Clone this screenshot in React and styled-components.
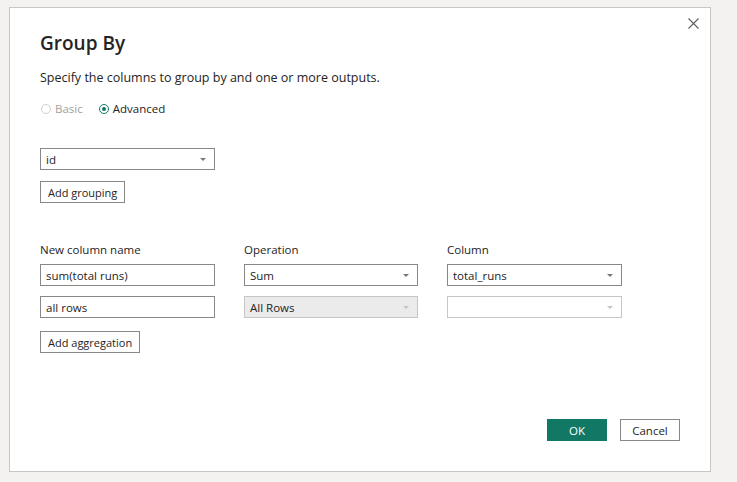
import React from "react";
import styled, { createGlobalStyle } from "styled-components";

const Global = createGlobalStyle`
  html, body { margin: 0; padding: 0; background: #f3f2f1; }
  body { font-family: "Open Sans", "Noto Sans", sans-serif; color: #252423; }
  * { box-sizing: border-box; }
`;

const Page = styled.div`
  width: 737px;
  height: 482px;
  padding: 7px 0 0 9px;
`;

const Dialog = styled.div`
  position: relative;
  width: 702px;
  height: 465px;
  background: #fff;
  border: 1px solid #c8c6c4;
  padding: 20px 30px 0 30px;
  display: flex;
  flex-direction: column;
`;

const Close = styled.button`
  position: absolute;
  top: 6px;
  right: 8px;
  width: 18px;
  height: 18px;
  padding: 0;
  border: none;
  background: transparent;
  display: flex;
  align-items: center;
  justify-content: center;
`;

const Title = styled.h1`
  margin: 0;
  font-size: 19px;
  font-weight: 600;
  line-height: 30px;
  color: #252423;
`;

const Subtitle = styled.p`
  margin: 11px 0 0 0;
  font-size: 12.5px;
  line-height: 18px;
`;

const RadioRow = styled.div`
  display: flex;
  gap: 16px;
  margin-top: 14px;
  padding-left: 1px;
  font-size: 11.5px;
  line-height: 16px;
`;

const RadioLabel = styled.label`
  display: flex;
  align-items: center;
  gap: 4px;
  color: ${(p) => (p.disabled ? "#a19f9d" : "#252423")};
`;

const RadioDot = styled.span`
  width: 10px;
  height: 10px;
  border-radius: 50%;
  border: 1px solid ${(p) => (p.checked ? "#117865" : "#d2d0ce")};
  display: flex;
  align-items: center;
  justify-content: center;
  &::after {
    content: "";
    width: 4px;
    height: 4px;
    border-radius: 50%;
    background: ${(p) => (p.checked ? "#117865" : "transparent")};
  }
`;

const Field = styled.div`
  width: ${(p) => p.w || 175}px;
  height: 22px;
  border: 1px solid ${(p) => (p.faint ? "#c8c6c4" : "#8a8886")};
  background: ${(p) => (p.shade ? "#ebebeb" : "#fff")};
  display: flex;
  align-items: center;
  justify-content: space-between;
  padding: 0 8px 0 5px;
  font-size: 11.5px;
  color: #252423;
`;

const Arrow = styled.span`
  width: 0;
  height: 0;
  border-left: 3px solid transparent;
  border-right: 3px solid transparent;
  border-top: 3px solid ${(p) => (p.faint ? "#c8c6c4" : "#79777a")};
`;

const Button = styled.button`
  height: 22px;
  padding: 0 7px;
  border: 1px solid #8a8886;
  background: #fff;
  font-family: inherit;
  font-size: 11px;
  color: #252423;
  align-self: flex-start;
`;

const GroupArea = styled.div`
  display: flex;
  flex-direction: column;
  gap: 11px;
  margin-top: 31px;
`;

const Grid = styled.div`
  display: grid;
  grid-template-columns: 204px 203px 175px;
  row-gap: 10px;
  margin-top: 39px;
`;

const ColLabel = styled.div`
  font-size: 11.5px;
  line-height: 16px;
  margin-bottom: -4px;
  color: #252423;
`;

const AggButton = styled(Button)`
  margin-top: 13px;
`;

const Footer = styled.div`
  margin-top: auto;
  margin-bottom: 30px;
  display: flex;
  justify-content: flex-end;
  gap: 13px;
`;

const FootButton = styled.button`
  width: 60px;
  height: 22px;
  font-family: inherit;
  font-size: 11.5px;
  border: 1px solid ${(p) => (p.primary ? "#117865" : "#8a8886")};
  background: ${(p) => (p.primary ? "#117865" : "#fff")};
  color: ${(p) => (p.primary ? "#fff" : "#252423")};
`;

const Select = ({ value, w, shade, faint }) => (
  <Field w={w} shade={shade} faint={faint}>
    <span>{value}</span>
    <Arrow faint={faint} />
  </Field>
);

export default function App() {
  return (
    <Page>
      <Global />
      <Dialog>
        <Close aria-label="Close">
          <svg width="11" height="11" viewBox="0 0 11 11">
            <path d="M0.5 0.5 L10.5 10.5 M10.5 0.5 L0.5 10.5" stroke="#605e5c" strokeWidth="1.1" />
          </svg>
        </Close>
        <Title>Group By</Title>
        <Subtitle>Specify the columns to group by and one or more outputs.</Subtitle>
        <RadioRow>
          <RadioLabel disabled>
            <RadioDot />
            Basic
          </RadioLabel>
          <RadioLabel>
            <RadioDot checked />
            Advanced
          </RadioLabel>
        </RadioRow>
        <GroupArea>
          <Select value="id" />
          <Button>Add grouping</Button>
        </GroupArea>
        <Grid>
          <ColLabel>New column name</ColLabel>
          <ColLabel>Operation</ColLabel>
          <ColLabel>Column</ColLabel>
          <Field>sum(total runs)</Field>
          <Select value="Sum" w={174} />
          <Select value="total_runs" />
          <Field>all rows</Field>
          <Select value="All Rows" w={174} shade faint />
          <Select value="" faint />
        </Grid>
        <AggButton>Add aggregation</AggButton>
        <Footer>
          <FootButton primary>OK</FootButton>
          <FootButton>Cancel</FootButton>
        </Footer>
      </Dialog>
    </Page>
  );
}
